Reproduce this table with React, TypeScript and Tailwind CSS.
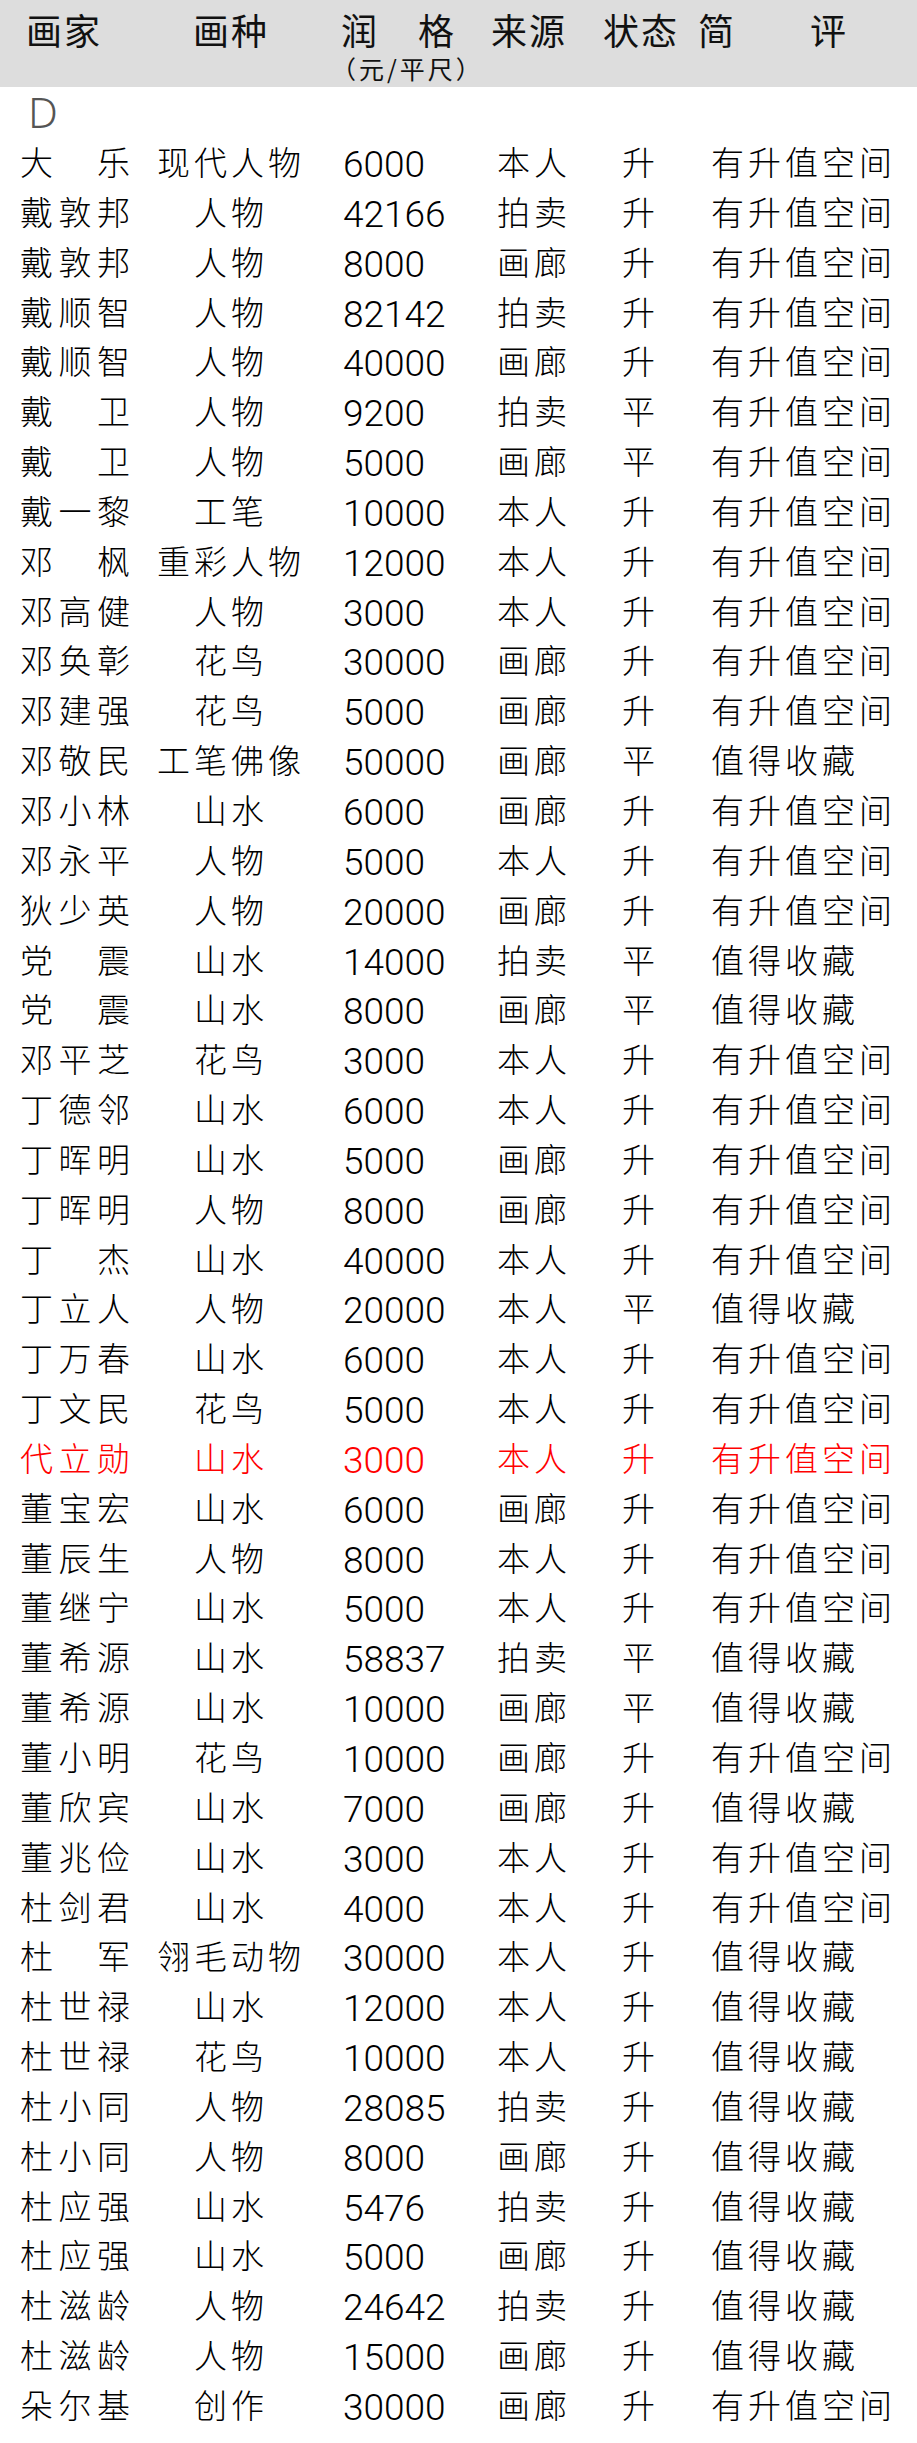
import React from 'react';

type Row = [string, string, string, string, string, string, boolean?];

const rows: Row[] = [
    ['大 乐', '现代人物', '6000', '本人', '升', '有升值空间'],
    ['戴敦邦', '人物', '42166', '拍卖', '升', '有升值空间'],
    ['戴敦邦', '人物', '8000', '画廊', '升', '有升值空间'],
    ['戴顺智', '人物', '82142', '拍卖', '升', '有升值空间'],
    ['戴顺智', '人物', '40000', '画廊', '升', '有升值空间'],
    ['戴 卫', '人物', '9200', '拍卖', '平', '有升值空间'],
    ['戴 卫', '人物', '5000', '画廊', '平', '有升值空间'],
    ['戴一黎', '工笔', '10000', '本人', '升', '有升值空间'],
    ['邓 枫', '重彩人物', '12000', '本人', '升', '有升值空间'],
    ['邓高健', '人物', '3000', '本人', '升', '有升值空间'],
    ['邓奂彰', '花鸟', '30000', '画廊', '升', '有升值空间'],
    ['邓建强', '花鸟', '5000', '画廊', '升', '有升值空间'],
    ['邓敬民', '工笔佛像', '50000', '画廊', '平', '值得收藏'],
    ['邓小林', '山水', '6000', '画廊', '升', '有升值空间'],
    ['邓永平', '人物', '5000', '本人', '升', '有升值空间'],
    ['狄少英', '人物', '20000', '画廊', '升', '有升值空间'],
    ['党 震', '山水', '14000', '拍卖', '平', '值得收藏'],
    ['党 震', '山水', '8000', '画廊', '平', '值得收藏'],
    ['邓平芝', '花鸟', '3000', '本人', '升', '有升值空间'],
    ['丁德邻', '山水', '6000', '本人', '升', '有升值空间'],
    ['丁晖明', '山水', '5000', '画廊', '升', '有升值空间'],
    ['丁晖明', '人物', '8000', '画廊', '升', '有升值空间'],
    ['丁 杰', '山水', '40000', '本人', '升', '有升值空间'],
    ['丁立人', '人物', '20000', '本人', '平', '值得收藏'],
    ['丁万春', '山水', '6000', '本人', '升', '有升值空间'],
    ['丁文民', '花鸟', '5000', '本人', '升', '有升值空间'],
    ['代立勋', '山水', '3000', '本人', '升', '有升值空间', true],
    ['董宝宏', '山水', '6000', '画廊', '升', '有升值空间'],
    ['董辰生', '人物', '8000', '本人', '升', '有升值空间'],
    ['董继宁', '山水', '5000', '本人', '升', '有升值空间'],
    ['董希源', '山水', '58837', '拍卖', '平', '值得收藏'],
    ['董希源', '山水', '10000', '画廊', '平', '值得收藏'],
    ['董小明', '花鸟', '10000', '画廊', '升', '有升值空间'],
    ['董欣宾', '山水', '7000', '画廊', '升', '值得收藏'],
    ['董兆俭', '山水', '3000', '本人', '升', '有升值空间'],
    ['杜剑君', '山水', '4000', '本人', '升', '有升值空间'],
    ['杜 军', '翎毛动物', '30000', '本人', '升', '值得收藏'],
    ['杜世禄', '山水', '12000', '本人', '升', '值得收藏'],
    ['杜世禄', '花鸟', '10000', '本人', '升', '值得收藏'],
    ['杜小同', '人物', '28085', '拍卖', '升', '值得收藏'],
    ['杜小同', '人物', '8000', '画廊', '升', '值得收藏'],
    ['杜应强', '山水', '5476', '拍卖', '升', '值得收藏'],
    ['杜应强', '山水', '5000', '画廊', '升', '值得收藏'],
    ['杜滋龄', '人物', '24642', '拍卖', '升', '值得收藏'],
    ['杜滋龄', '人物', '15000', '画廊', '升', '值得收藏'],
    ['朵尔基', '创作', '30000', '画廊', '升', '有升值空间'],
];

function Header() {
    return (
        <div className="flex h-[87px] bg-[#dddddd] pl-[26px] pt-[11px] text-[36px] leading-[36px] tracking-[2px] text-[#111]">
            <div className="w-[167px]">画家</div>
            <div className="w-[148px]">画种</div>
            <div className="flex w-[150px] flex-col">
                <div className="flex">
                    <span>润</span>
                    <span className="ml-[39px]">格</span>
                </div>
                <div className="-ml-[10px] mt-[9px] text-[25px] leading-[25px] tracking-[3px]">
                    （元/平尺）
                </div>
            </div>
            <div className="w-[112px]">来源</div>
            <div className="w-[95px]">状态</div>
            <div className="w-[112px]">简</div>
            <div>评</div>
        </div>
    );
}

function TableRow({ row }: { row: Row }) {
    const [name, kind, price, source, status, remark, red] = row;
    const chars = name.replace(/\s/g, '').split('');

    return (
        <div
            className={`flex h-[49.85px] items-start pl-[20px] text-[33px] font-light leading-[49.85px] ${
                red ? 'text-[#ff0000]' : 'text-black'
            }`}
        >
            <div className="flex w-[110px] justify-between">
                {chars.map((c, i) => (
                    <span key={i}>{c}</span>
                ))}
            </div>
            <div className="ml-[10px] w-[178px] pl-[4px] text-center tracking-[4px]">{kind}</div>
            <div className="ml-[25px] w-[154px] pt-[3px] font-['Roboto',sans-serif] text-[37px]">
                {price}
            </div>
            <div className="w-[125px] tracking-[4px]">{source}</div>
            <div className="w-[89px]">{status}</div>
            <div className="tracking-[4px]">{remark}</div>
        </div>
    );
}

export default function App() {
    return (
        <div className="min-h-[2443px] w-[917px] bg-white font-['Noto_Sans_CJK_SC',sans-serif]">
            <Header />

            {/* section letter */}
            <div className="h-[50px] pl-[28px] font-['Noto_Sans',sans-serif] text-[42px] font-light leading-[50px] text-[#555]">
                D
            </div>

            <div>
                {rows.map((row, i) => (
                    <TableRow key={i} row={row} />
                ))}
            </div>
        </div>
    );
}
